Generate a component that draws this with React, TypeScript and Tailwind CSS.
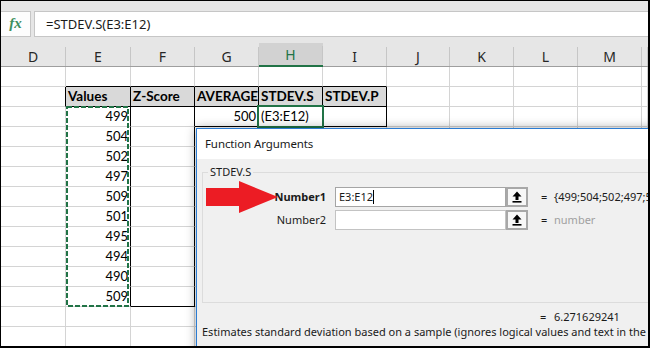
import React from "react";

const letters = ["D", "E", "F", "G", "H", "I", "J", "K", "L", "M", ""];
const values = ["499", "504", "502", "497", "509", "501", "495", "494", "490", "509"];
const heads = ["", "Values", "Z-Score", "AVERAGE", "STDEV.S", "STDEV.P"];

function vBlack(r: number, c: number) {
  if (r === 1 && c >= 0 && c <= 5) return true;
  if (r === 2 && c >= 1 && c <= 5) return true;
  if (r >= 3 && r <= 11 && (c === 1 || c === 2)) return true;
  return false;
}
function hBlack(r: number, c: number) {
  if (r === 0 && c >= 1 && c <= 5) return true;
  if (r === 1 && c >= 1 && c <= 5) return true;
  if (r === 2 && c >= 3 && c <= 5) return true;
  if (r === 11 && c === 2) return true;
  return false;
}

function cellText(r: number, c: number): { t: string; right?: boolean; bold?: boolean } | null {
  if (r === 1 && c >= 1 && c <= 5) return { t: heads[c], bold: true };
  if (r === 2 && c === 3) return { t: "500", right: true };
  if (r === 2 && c === 4) return { t: "(E3:E12)" };
  if (r >= 2 && r <= 11 && c === 1) return { t: values[r - 2], right: true };
  return null;
}

function UpIcon() {
  return (
    <svg width="10" height="12" viewBox="0 0 10 12">
      <path d="M5 0.5 L9.5 5.5 L6.5 5.5 L6.5 9 L3.5 9 L3.5 5.5 L0.5 5.5 Z" fill="#000" />
      <rect x="0.5" y="10" width="9" height="1.6" fill="#000" />
    </svg>
  );
}

export default function App() {
  const rows = Array.from({ length: 14 }, (_, i) => i);
  return (
    <div className="w-[650px] h-[348px] bg-black pt-px pl-px overflow-hidden">
      <div className="relative w-[647px] h-[345px] bg-white overflow-hidden">
        {/* formula bar */}
        <div className="h-[42px] bg-[#e6e6e6] pt-[10px] flex items-start">
          <div className="w-[30px] h-[26px] bg-[#fdfdfd] border border-l-0 border-[#c6c6c6] flex items-center justify-center">
            <span className="font-['Liberation_Serif',serif] italic font-bold text-[15px] text-[#3f8f5e] leading-none -mt-[2px]">fx</span>
          </div>
          <div className="ml-[3px] flex-1 h-[26px] bg-white border border-r-0 border-[#c6c6c6] pl-[11px] flex items-center">
            <span className="font-['Noto_Sans',sans-serif] text-[13px] text-[#1a1a1a] leading-none">=STDEV.S(E3:E12)</span>
          </div>
        </div>
        {/* column headers */}
        <div className="grid grid-cols-[65px_65px_64px_64px_64px_64px_63px_64px_64px_64px_6px] h-[24px] bg-[#e6e6e6]">
          {letters.map((l, i) => (
            <div
              key={i}
              className={
                i === 4
                  ? "h-[24px] pt-[4px] bg-[#d2d2d2] border-b-2 border-[#217346]"
                  : "h-[24px] pt-[4px] border-b border-[#9e9e9e]"
              }
            >
              <div
                className={
                  i === 4
                    ? "h-full border-r border-[#c6c6c6] flex items-center justify-center font-['Noto_Sans',sans-serif] text-[14px] text-[#217346] leading-none -mt-px"
                    : "h-full border-r border-[#c6c6c6] flex items-center justify-center font-['Noto_Sans',sans-serif] text-[14px] text-[#262626] leading-none"
                }
              >
                {l}
              </div>
            </div>
          ))}
        </div>
        {/* cells */}
        <div className="grid grid-cols-[65px_65px_64px_64px_64px_64px_63px_64px_64px_64px_6px]">
          {rows.map((r) =>
            letters.map((_, c) => {
              const ct = cellText(r, c);
              const cls = [
                "h-[20px] border-r border-b flex items-end px-[2px] pb-[2px] font-['Lato',sans-serif] leading-[16px] text-black whitespace-nowrap overflow-hidden",
                vBlack(r, c) ? "border-r-black" : "border-r-[#d4d4d4]",
                hBlack(r, c) ? "border-b-black" : "border-b-[#d4d4d4]",
                r === 1 && c >= 1 && c <= 5 ? "bg-[#d9d9d9]" : "bg-white",
                ct && ct.right ? "justify-end" : "justify-start",
                ct && ct.bold ? "font-bold text-[13.5px]" : "text-[13px]",
              ].join(" ");
              return (
                <div key={r + "-" + c} className={cls}>
                  {ct ? ct.t : null}
                </div>
              );
            })
          )}
        </div>

        {/* copy marquee around E3:E12 */}
        <svg className="absolute left-[65px] top-[105px]" width="63" height="201">
          <rect x="1" y="1" width="61" height="199" fill="none" stroke="#217346" strokeWidth="2" strokeDasharray="5 2" />
        </svg>
        {/* active cell H3 */}
        <div className="absolute left-[256px] top-[104px] w-[67px] h-[23px] border-2 border-[#217346]" />

        {/* dialog */}
        <div className="absolute left-[195px] top-[127px] w-[460px] h-[230px] border-t border-l border-[#2b7cd3] bg-[#f0f0f0] shadow-[0_0_10px_rgba(0,0,0,0.35)] flex flex-col font-['Noto_Sans',sans-serif] text-[11px] text-[#1a1a1a]">
          <div className="h-[30px] bg-white pl-[8px] flex items-center">
            <span className="text-[11.5px] tracking-[-0.1px] leading-none">Function Arguments</span>
          </div>
          <div className="pl-[5px] pt-[6px] flex flex-col">
            <fieldset className="h-[138px] border border-[#dcdcdc] pl-0 pt-[8px] m-0">
              <legend className="ml-[5px] px-[2px] text-[11px] leading-[14px]">STDEV.S</legend>
              <div className="flex flex-col gap-[3px]">
                <div className="flex items-center h-[20px]">
                  <div className="w-[123px] text-right font-bold">Number1</div>
                  <div className="ml-[9px] w-[171px] h-[20px] bg-white border border-[#a5a5a5] pl-[3px] flex items-center">
                    <span>E3:E12</span>
                    <span className="w-px h-[14px] bg-black" />
                  </div>
                  <div className="w-[22px] h-[20px] border-2 border-[#a8a8a8] bg-[#f7f7f7] flex items-center justify-center">
                    <UpIcon />
                  </div>
                  <div className="ml-[13px] w-[6px]">=</div>
                  <div className="ml-[7px] whitespace-nowrap">{"{499;504;502;497;509;501;495;494;490;509}"}</div>
                </div>
                <div className="flex items-center h-[20px]">
                  <div className="w-[123px] text-right">Number2</div>
                  <div className="ml-[9px] w-[171px] h-[20px] bg-white border border-[#c3c3c3]" />
                  <div className="w-[22px] h-[20px] border-2 border-[#a8a8a8] bg-[#f7f7f7] flex items-center justify-center">
                    <UpIcon />
                  </div>
                  <div className="ml-[13px] w-[6px]">=</div>
                  <div className="ml-[7px] text-[#a0a0a0]">number</div>
                </div>
              </div>
            </fieldset>
            <div className="mt-[6px] h-[15px] pl-[338px] flex items-center leading-[15px] whitespace-nowrap">
              <span className="w-[6px]">=</span>
              <span className="ml-[8px]">6.271629241</span>
            </div>
            <div className="h-[15px] leading-[15px] whitespace-nowrap">
              Estimates standard deviation based on a sample (ignores logical values and text in the sample).
            </div>
          </div>
          {/* red annotation arrow */}
          <svg className="absolute left-0 top-0" width="100" height="100" viewBox="0 0 100 100">
            <polygon points="9,59 42,59 42,52 81,68 42,84 42,77 9,77" fill="#ec1c24" />
          </svg>
        </div>
      </div>
    </div>
  );
}
